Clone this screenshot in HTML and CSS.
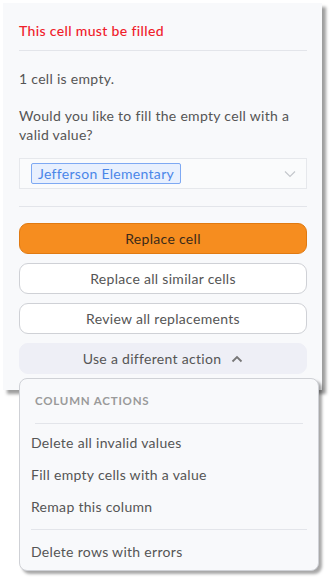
FILE: index.html
```html
<!DOCTYPE html>
<html>
<head>
<meta charset="utf-8">
<link rel="stylesheet" href="styles.css">
</head>
<body>
<div class="card">
  <div class="title">This cell must be filled</div>
  <div class="rule"></div>
  <p class="text first">1 cell is empty.</p>
  <p class="text">Would you like to fill the empty cell with a valid value?</p>
  <div class="select">
    <span class="tag">Jefferson Elementary</span>
    <svg class="chev" width="12" height="8" viewBox="0 0 12 8"><path d="M1 1.5 L6 6.5 L11 1.5" fill="none" stroke="#c4c7cc" stroke-width="1.2"/></svg>
  </div>
  <div class="rule second"></div>
  <div class="buttons">
    <button class="btn primary">Replace cell</button>
    <button class="btn">Replace all similar cells</button>
    <button class="btn">Review all replacements</button>
    <div class="toggle-wrap">
      <button class="btn alt">Use a different action
        <svg class="up" width="12" height="8" viewBox="0 0 12 8"><path d="M1.5 6.5 L6 2 L10.5 6.5" fill="none" stroke="#777" stroke-width="1.8"/></svg>
      </button>
      <div class="menu">
        <div class="menu-head">COLUMN ACTIONS</div>
        <div class="menu-rule head-rule"></div>
        <div class="item">Delete all invalid values</div>
        <div class="item">Fill empty cells with a value</div>
        <div class="item">Remap this column</div>
        <div class="menu-rule"></div>
        <div class="item">Delete rows with errors</div>
      </div>
    </div>
  </div>
</div>
</body>
</html>
```
FILE: styles.css
```css
* { box-sizing: border-box; }
html, body { min-height: 583px; }
body {
  margin: 0;
  background: #ffffff;
  font-family: "Lato", "Open Sans", sans-serif;
  color: #555;
}
.card {
  margin: 3px 0 0 3px;
  width: 319px;
  height: 387px;
  background: #f8f9fb;
  padding: 18px 15px 0 16px;
  box-shadow: 4px 4px 3px rgba(0,0,0,0.38);
  position: relative;
}
.title {
  color: #f0202a;
  font-size: 14px;
  line-height: 20px;
  font-weight: 500;
  letter-spacing: 0.35px;
}
.rule {
  height: 1px;
  background: #e3e5ea;
  margin-top: 9px;
}
.rule.second { margin-top: 17px; }
.text {
  margin: 18px 0 0;
  font-size: 14px;
  line-height: 19px;
  letter-spacing: 0.3px;
  color: #555;
}
.select {
  margin-top: 14px;
  height: 31px;
  border: 1px solid #e6e8ec;
  background: #fafbfc;
  display: flex;
  align-items: center;
  padding-left: 11px;
  padding-right: 10px;
  justify-content: space-between;
}
.tag {
  background: #e8f0fe;
  border: 1px solid #7ea9f3;
  border-radius: 2px;
  color: #4a86e8;
  font-size: 14px;
  line-height: 19px;
  letter-spacing: 0.3px;
  padding: 0 6px;
}
.chev { display: block; }
.buttons {
  margin-top: 16px;
  display: flex;
  flex-direction: column;
  gap: 9px;
}
.btn {
  height: 31px;
  border-radius: 9px;
  border: 1px solid #cfd1d6;
  background: #fff;
  font-family: inherit;
  font-size: 14px;
  letter-spacing: 0.3px;
  color: #555;
  display: flex;
  align-items: center;
  justify-content: center;
  gap: 10px;
  width: 100%;
  padding: 0;
}
.btn.primary {
  background: #f68d1f;
  border-color: #e07a12;
  color: #3a2a1a;
}
.btn.alt {
  background: #eeeff6;
  border-color: #eeeff6;
}
.toggle-wrap { position: relative; }
.up { display: block; }
.menu {
  position: absolute;
  left: 0;
  top: 35px;
  width: 300px;
  height: 193px;
  background: #f8f9fb;
  border: 1px solid #cfd1d6;
  border-radius: 8px;
  box-shadow: 3px 3px 3px rgba(0,0,0,0.35);
  padding: 14px 11px 0 11px;
  z-index: 2;
}
.menu-head {
  font-size: 11.5px;
  font-weight: 700;
  letter-spacing: 0.8px;
  color: #9a9a9a;
  line-height: 16px;
  padding-left: 4px;
}
.menu-rule {
  height: 1px;
  background: #e3e5ea;
  margin: 7px 0 5px;
}
.head-rule { margin: 14px 4px 2px 4px; }
.item {
  font-size: 14px;
  letter-spacing: 0.3px;
  line-height: 19px;
  padding: 6.5px 0;
  color: #555;
}
```
